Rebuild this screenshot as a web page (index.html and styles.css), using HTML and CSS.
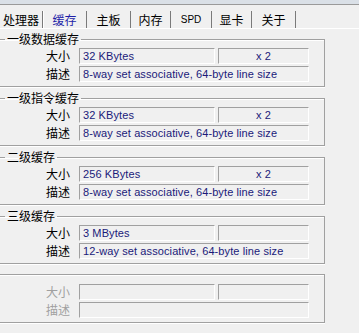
FILE: index.html
```html
<!DOCTYPE html>
<html lang="zh-CN">

<head>
    <meta charset="UTF-8" />
    <title>CPU-Z 缓存</title>
    <link rel="stylesheet" href="styles.css">
</head>

<body>
    <div class="topbar"></div>
    <ul class="tabs">
        <li>处理器</li>
        <li class="active">缓存</li>
        <li>主板</li>
        <li>内存</li>
        <li class="latin">SPD</li>
        <li>显卡</li>
        <li>关于</li>
    </ul>

    <div class="pane">
        <fieldset class="group">
            <legend>一级数据缓存</legend>
            <div class="rows">
                <label>大小</label>
                <div class="field">32 KBytes</div>
                <div class="field center">x 2</div>
                <label>描述</label>
                <div class="field wide">8-way set associative, 64-byte line size</div>
            </div>
        </fieldset>

        <fieldset class="group">
            <legend>一级指令缓存</legend>
            <div class="rows">
                <label>大小</label>
                <div class="field">32 KBytes</div>
                <div class="field center">x 2</div>
                <label>描述</label>
                <div class="field wide">8-way set associative, 64-byte line size</div>
            </div>
        </fieldset>

        <fieldset class="group">
            <legend>二级缓存</legend>
            <div class="rows">
                <label>大小</label>
                <div class="field">256 KBytes</div>
                <div class="field center">x 2</div>
                <label>描述</label>
                <div class="field wide">8-way set associative, 64-byte line size</div>
            </div>
        </fieldset>

        <fieldset class="group">
            <legend>三级缓存</legend>
            <div class="rows">
                <label>大小</label>
                <div class="field">3 MBytes</div>
                <div class="field center"></div>
                <label>描述</label>
                <div class="field wide">12-way set associative, 64-byte line size</div>
            </div>
        </fieldset>

        <fieldset class="group empty">
            <div class="rows">
                <label>大小</label>
                <div class="field"></div>
                <div class="field center"></div>
                <label>描述</label>
                <div class="field wide"></div>
            </div>
        </fieldset>
    </div>
</body>

</html>
```

FILE: styles.css
```css
* {
    box-sizing: border-box;
    margin: 0;
    padding: 0;
}

body {
    background: #f0f0f0;
    font-family: "Noto Sans CJK SC", sans-serif;
    font-size: 12px;
    color: #000;
    overflow: hidden;
}

.topbar {
    height: 5px;
    background: #dae0e7;
    border-bottom: 1px solid #9a9a9a;
}

.tabs {
    display: grid;
    grid-template-columns: 43px 44px 44px 40px 41px 40px 44px;
    list-style: none;
    height: 24px;
    border-bottom: 1px solid #fff;
}

.tabs li {
    margin-top: 6px;
    height: 17px;
    line-height: 17px;
    text-align: center;
    border-right: 1px solid #7a7a7a;
    white-space: nowrap;
}

.tabs li.active {
    color: #1f1fa8;
    box-shadow: inset 1px 0 0 #fff;
}

.tabs li.latin {
    font-family: "Liberation Sans", sans-serif;
    font-size: 10px;
}

.pane {
    padding-top: 3px;
}

.group {
    width: 327px;
    min-width: 0;
    margin: 0 0 4px -2px;
    padding: 2px 0 4px 6px;
    border: 1px solid #a0a0a0;
    box-shadow: inset 0 1px 0 #fff, 0 1px 0 #fff;
}

.group legend {
    padding: 0 2px;
    line-height: 14px;
}

.group.empty {
    margin-top: 10px;
    padding-top: 9px;
}

.rows {
    display: grid;
    grid-template-columns: 71px 136px 91px;
    grid-auto-rows: 16px;
    column-gap: 3px;
    row-gap: 2px;
}

.rows label {
    text-align: right;
    padding-right: 6px;
    line-height: 16px;
}

.empty label {
    color: #a0a0a0;
}

.field {
    border: 1px solid;
    border-color: #a0a0a0 #fff #fff #a0a0a0;
    padding-left: 3px;
    font-family: "Liberation Sans", "Noto Sans CJK SC", sans-serif;
    font-size: 11px;
    letter-spacing: 0.1px;
    line-height: 14px;
    color: #1a1a7a;
    white-space: nowrap;
    overflow: hidden;
}

.field.center {
    text-align: center;
    padding-left: 0;
}

.field.wide {
    grid-column: 2 / 4;
}
```
